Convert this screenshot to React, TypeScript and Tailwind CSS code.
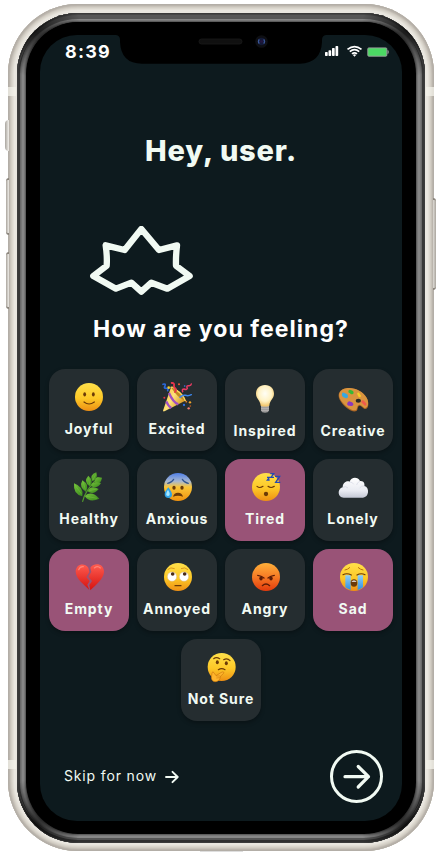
import React from "react";

type Mood = { label: string; art: React.ReactNode; selected?: boolean; low?: boolean };

function Defs() {
  return (
    <svg className="absolute h-0 w-0" aria-hidden="true">
      <defs>
        <linearGradient id="face" x1="0" y1="0" x2="0" y2="1">
          <stop offset="0" stopColor="#ffe04a" />
          <stop offset="0.55" stopColor="#fdc827" />
          <stop offset="1" stopColor="#ee8f14" />
        </linearGradient>
        <linearGradient id="cold" x1="0" y1="0" x2="0" y2="1">
          <stop offset="0" stopColor="#4f7fe8" />
          <stop offset="0.3" stopColor="#a9b8cf" />
          <stop offset="0.5" stopColor="#fbc638" />
          <stop offset="1" stopColor="#f0920f" />
        </linearGradient>
        <linearGradient id="rage" x1="0" y1="0" x2="0" y2="1">
          <stop offset="0" stopColor="#ffb03a" />
          <stop offset="0.5" stopColor="#f67a25" />
          <stop offset="1" stopColor="#e23a0c" />
        </linearGradient>
        <radialGradient id="bulb" cx="0.5" cy="0.4" r="0.6">
          <stop offset="0" stopColor="#fffef6" />
          <stop offset="0.6" stopColor="#fff2c4" />
          <stop offset="1" stopColor="#f0c163" />
        </radialGradient>
        <linearGradient id="cloud" x1="0" y1="0" x2="0" y2="1">
          <stop offset="0" stopColor="#ffffff" />
          <stop offset="0.65" stopColor="#e9ebf2" />
          <stop offset="1" stopColor="#c5c9d6" />
        </linearGradient>
        <linearGradient id="heart" x1="0" y1="0" x2="0" y2="1">
          <stop offset="0" stopColor="#ff5c50" />
          <stop offset="1" stopColor="#d5120f" />
        </linearGradient>
        <linearGradient id="leaf" x1="0" y1="0" x2="1" y2="1">
          <stop offset="0" stopColor="#74c23a" />
          <stop offset="1" stopColor="#38871c" />
        </linearGradient>
        <linearGradient id="cone" x1="0" y1="0" x2="1" y2="0.6">
          <stop offset="0" stopColor="#f3b52d" />
          <stop offset="0.5" stopColor="#ffe37a" />
          <stop offset="1" stopColor="#d18d1b" />
        </linearGradient>
        <linearGradient id="tear" x1="0" y1="0" x2="0" y2="1">
          <stop offset="0" stopColor="#8fd0f6" />
          <stop offset="1" stopColor="#2f8fe0" />
        </linearGradient>
      </defs>
    </svg>
  );
}

const ink = "#6b3a07";

const Joyful = (
  <g>
    <circle cx="45" cy="45" r="42" fill="url(#face)" />
    <ellipse cx="32" cy="37" rx="4.2" ry="6.5" fill={ink} />
    <ellipse cx="58" cy="37" rx="4.2" ry="6.5" fill={ink} />
    <path d="M30 60 Q45 72 61 60" fill="none" stroke={ink} strokeWidth="3.6" strokeLinecap="round" />
  </g>
);

const Excited = (
  <g fill="none" strokeLinecap="round">
    <path d="M27 16 L3 86 Q4 90 9 87 L70 56 Q54 23 27 16Z" fill="url(#cone)" />
    <path d="M21 33 Q33 61 49 67 M13 58 Q19 73 28 78" stroke="#a04fc2" strokeWidth="7" strokeLinecap="butt" />
    <path d="M27 16 Q52 22 70 56 Q46 48 27 16Z" fill="#c08a22" />
    <path d="M27 16 Q34 13 45 26 Q63 37 70 56" stroke="#ffd65c" strokeWidth="4" />
    <path d="M3 7 q9 -3 6 5 q-5 7 4 7 q7 -1 4 7" stroke="#2c69dc" strokeWidth="5" />
    <path d="M29 3 q9 -1 7 8 q-1 6 4 8 q4 5 -1 11" stroke="#e9334c" strokeWidth="5.5" />
    <path d="M62 29 q-3 -8 4 -8 q8 4 10 -2 q-4 -8 3 -8 q8 1 9 -5" stroke="#e83b63" strokeWidth="4.5" />
    <path d="M54 46 q8 -8 16 -6 q9 3 18 -2" stroke="#3c86ec" strokeWidth="4.5" />
    <g stroke="none">
      <circle cx="20" cy="17" r="4" fill="#f8cf30" />
      <circle cx="51" cy="7" r="3" fill="#f45a38" />
      <circle cx="7" cy="47" r="3" fill="#e32f48" />
      <circle cx="84" cy="61" r="3.5" fill="#f0a42b" />
      <circle cx="66" cy="69" r="3.5" fill="#336ee0" />
      <circle cx="80" cy="79" r="3.5" fill="#f57c72" />
      <circle cx="73" cy="59" r="2.5" fill="#e37b26" />
      <circle cx="85" cy="72" r="2.5" fill="#bc5920" />
      <circle cx="68" cy="12" r="2.5" fill="#3f78e9" />
    </g>
  </g>
);

const Inspired = (
  <g>
    <path d="M33 62 H57 V80 Q55 86 45 86 Q35 86 33 80Z" fill="#9b9a99" />
    <path d="M33 67 H57 M33 73 H57 M34 79 H56" stroke="#c2c0bd" strokeWidth="2" />
    <path d="M45 3 C28 3 18 15 18 29 C18 44 31 48 32 65 Q45 70 58 65 C59 48 72 44 72 29 C72 15 62 3 45 3Z" fill="url(#bulb)" />
  </g>
);

const Creative = (
  <g>
    <path d="M24 13 C45 8 75 21 86 42 C95 59 91 75 82 75 C75 75 73 66 65 65 C56 66 62 80 53 82 C39 85 14 65 5 47 C-3 30 5 16 24 13Z" fill="#a96425" />
    <path d="M25 13 C45 8 75 21 86 41 C94 56 90 69 82 72 C75 72 73 63 64 62 C55 64 60 76 52 79 C38 80 15 62 6 44 C-1 29 7 16 25 13Z" fill="#d9943f" />
    <ellipse cx="61" cy="50" rx="8" ry="6" fill="#2a2a27" />
    <path d="M12 29 q2-7 9 -1 q9 2 9 10 q-3 8 -9 3 q-11 -3 -9 -12Z" fill="#36a8e0" />
    <path d="M31 21 q4 -7 9 -2 q9 3 6 10 q-7 4 -10 -1 q-6 -1 -5 -7Z" fill="#36b936" />
    <path d="M57 29 q4 -7 8 0 q6 5 3 10 q-6 2 -8 -4Z" fill="#f4cd26" />
    <path d="M71 50 q5 -4 9 3 q8 5 4 12 q-7 0 -9 -6 q-7 -3 -4 -9Z" fill="#ef5a4d" />
    <path d="M28 57 q3 -7 10 -4 q9 3 8 10 q-4 5 -10 2 q-10 2 -8 -8Z" fill="#8b37bd" />
  </g>
);

const Healthy = (
  <g>
    <path d="M26 88 Q33 56 72 17" fill="none" stroke="#539b2c" strokeWidth="3.5" strokeLinecap="round" />
    <g fill="url(#leaf)">
      <path d="M67 1 Q45 9 55 28 Q74 20 67 1Z" />
      <path d="M84 17 Q62 11 62 31 Q80 40 84 17Z" />
      <path d="M43 11 Q27 29 47 43 Q62 29 43 11Z" />
      <path d="M25 25 Q14 46 36 60 Q48 38 25 25Z" />
      <path d="M0 34 Q-3 67 25 73 Q31 45 0 34Z" />
      <path d="M81 33 Q53 25 51 42 Q68 53 81 33Z" />
      <path d="M74 51 Q50 38 41 58 Q58 71 74 51Z" />
      <path d="M76 80 Q53 54 32 72 Q46 94 76 80Z" />
    </g>
    <path d="M3 39 L23 67 M28 30 L34 53 M44 17 L47 38 M65 7 L57 24 M37 73 L69 79 M46 56 L69 51" stroke="#8dce50" strokeWidth="1" />
  </g>
);

const Anxious = (
  <g>
    <circle cx="48" cy="45" r="42" fill="url(#cold)" />
    <path d="M17 34 Q29 32 35 22 M61 22 Q67 32 79 34" fill="none" stroke="#315490" strokeWidth="3.5" strokeLinecap="round" />
    <ellipse cx="36" cy="47" rx="5" ry="6" fill={ink} />
    <ellipse cx="60" cy="47" rx="5" ry="6" fill={ink} />
    <path d="M33 74 Q36 62 48 62 Q60 62 63 74 Q48 68 33 74Z" fill={ink} />
    <path d="M19 46 Q7 60 8 69 Q10 78 19 78 Q29 78 30 69 Q30 60 19 46Z" fill="#2fa3e8" />
    <path d="M18 53 Q11 64 13 70 Q19 75 23 69 Q24 62 18 53Z" fill="#a7e7ff" />
  </g>
);

const Tired = (
  <g>
    <circle cx="48" cy="45" r="42" fill="url(#face)" />
    <path d="M21 43 Q29 50 39 43 M54 43 Q63 50 73 43" fill="none" stroke={ink} strokeWidth="3.5" strokeLinecap="round" />
    <ellipse cx="48" cy="66" rx="6.5" ry="6.5" fill={ink} />
    <path d="M51 16 H58 L52 24 H59 M61 5 H71 L63 16 H72 M75 13 H89 L77 31 H91" fill="none" stroke="#244bb4" strokeWidth="4" />
  </g>
);

const Lonely = (
  <g>
    <path d="M18 77 C-2 78 -3 50 14 46 C14 33 25 25 35 29 C39 14 60 13 66 27 C77 25 81 35 79 42 C96 46 93 76 75 77Z" fill="url(#cloud)" />
    <path d="M15 46 Q23 41 30 48 M35 30 Q44 30 47 37 M66 28 Q57 31 56 39 M79 42 Q70 40 65 48" fill="none" stroke="#d3d7e2" strokeWidth="2" />
  </g>
);

const Empty = (
  <g>
    <path d="M43 17 C31 0 5 6 5 29 C6 52 31 67 46 84 L40 68 L47 57 L37 45 L46 30Z" fill="url(#heart)" />
    <path d="M49 17 C62 0 90 5 90 29 C89 52 65 68 49 85 L46 69 L54 57 L43 44 L52 30Z" fill="url(#heart)" />
    <path d="M14 23 Q18 13 28 14 M61 18 Q71 10 79 18" fill="none" stroke="#ff8577" strokeWidth="3.5" strokeLinecap="round" />
  </g>
);

const Annoyed = (
  <g>
    <circle cx="48" cy="45" r="42" fill="url(#face)" />
    <circle cx="30" cy="44" r="14" fill="#fff" stroke="#d8b980" strokeWidth="1.5" />
    <circle cx="66" cy="44" r="14" fill="#fff" stroke="#d8b980" strokeWidth="1.5" />
    <circle cx="32" cy="36" r="5.5" fill="#4a2b17" />
    <circle cx="68" cy="36" r="5.5" fill="#4a2b17" />
    <path d="M39 71 H57" stroke={ink} strokeWidth="3.5" strokeLinecap="round" />
    <path d="M17 23 Q26 14 38 20 M57 20 Q69 14 78 23" fill="none" stroke="#d38a15" strokeWidth="2.5" />
  </g>
);

const Angry = (
  <g>
    <circle cx="48" cy="45" r="42" fill="url(#rage)" />
    <ellipse cx="33" cy="49" rx="5" ry="6.5" fill="#5d1c06" />
    <ellipse cx="63" cy="49" rx="5" ry="6.5" fill="#5d1c06" />
    <path d="M23 40 Q34 41 42 48 M54 48 Q62 41 73 40" fill="none" stroke="#5d1c06" strokeWidth="3.8" strokeLinecap="round" />
    <path d="M37 71 Q48 61 59 71" fill="none" stroke="#5d1c06" strokeWidth="4" strokeLinecap="round" />
  </g>
);

const Sad = (
  <g>
    <circle cx="48" cy="45" r="42" fill="url(#face)" />
    <path d="M22 40 H38 V84 Q27 80 22 76Z M59 40 H75 V76 Q69 81 59 84Z" fill="url(#tear)" />
    <path d="M15 38 Q27 32 40 39 M57 39 Q69 32 81 38" fill="none" stroke={ink} strokeWidth="3.6" strokeLinecap="round" />
    <path d="M21 24 Q29 23 35 17 M61 17 Q67 23 75 24" fill="none" stroke="#b86f12" strokeWidth="3" strokeLinecap="round" />
    <path d="M38 63 Q38 52 48 52 Q58 52 58 63 Q58 74 48 74 Q38 74 38 63Z" fill={ink} />
    <path d="M40 59 Q48 52 56 59Z" fill="#fff" />
  </g>
);

const NotSure = (
  <g>
    <circle cx="47" cy="45" r="42" fill="url(#face)" />
    <ellipse cx="34" cy="31" rx="4.5" ry="6" fill={ink} />
    <ellipse cx="61" cy="34" rx="4.5" ry="6" fill={ink} />
    <path d="M23 20 Q31 14 41 20 M53 23 Q64 17 72 26" fill="none" stroke={ink} strokeWidth="3.5" strokeLinecap="round" />
    <path d="M37 53 Q47 47 57 53" fill="none" stroke={ink} strokeWidth="3.5" strokeLinecap="round" />
    <path d="M18 63 Q20 55 25 64 L30 71 L48 60 Q56 58 52 65 L44 72 Q42 87 30 89 Q18 90 16 78Z" fill="#ffb52d" stroke="#cc790d" strokeWidth="2" />
    <path d="M31 72 L43 72 M31 78 L42 77" stroke="#cc790d" strokeWidth="1.8" />
  </g>
);

const moods: Mood[] = [
  { label: "Joyful", art: Joyful },
  { label: "Excited", art: Excited },
  { label: "Inspired", art: Inspired, low: true },
  { label: "Creative", art: Creative, low: true },
  { label: "Healthy", art: Healthy },
  { label: "Anxious", art: Anxious },
  { label: "Tired", art: Tired, selected: true },
  { label: "Lonely", art: Lonely },
  { label: "Empty", art: Empty, selected: true },
  { label: "Annoyed", art: Annoyed },
  { label: "Angry", art: Angry },
  { label: "Sad", art: Sad, selected: true },
  { label: "Not Sure", art: NotSure },
];

function MoodCard({ label, art, selected, low }: Mood) {
  return (
    <button
      className={`flex h-[82px] w-20 flex-col items-center rounded-2xl shadow-[0_2px_4px_rgba(0,0,0,0.3)] ${
        selected ? "bg-[#995377]" : "bg-[#252d30]"
      } ${low ? "pt-[15px]" : "pt-[13px]"}`}
    >
      <svg viewBox="0 0 90 90" className="h-[30px] w-[30px] shrink-0 overflow-visible">{art}</svg>
      <span className="mt-[7px] text-[14px] leading-5 font-bold tracking-[0.9px] whitespace-nowrap text-[#f1faf3]">
        {label}
      </span>
    </button>
  );
}

function Notch() {
  return (
    <div className="absolute top-0 left-[76px] h-[29px] w-[210px]">
      <svg viewBox="0 0 210 29" className="h-full w-full">
        <path d="M0 0 Q4 0.5 4 5 V7 Q5 28.7 26 28.7 H184 Q205 28 206 7 V5 Q206 0.5 210 0Z" fill="#000" />
        <rect x="83" y="4" width="43" height="5" rx="2.5" fill="#101010" stroke="#1b1b1b" strokeWidth="0.8" />
        <circle cx="145.500" cy="6.500" r="6.300" fill="#0e0f13" />
        <circle cx="145.500" cy="6.500" r="3.700" fill="#131936" />
        <path d="M143.300 4.300 Q141.500 6.500 143.300 8.700 M147.700 4.300 Q149.500 6.500 147.700 8.700" fill="none" stroke="#3a5697" strokeWidth="1.200" />
        <circle cx="145.500" cy="6.500" r="1.300" fill="#261540" />
      </svg>
    </div>
  );
}

function StatusBar() {
  return (
    <div className="flex h-8 items-center justify-between pr-[13px] pl-[25px]">
      <span className="mt-[2px] text-[18px] leading-8 font-bold tracking-[1.2px] text-white">8:39</span>
      <svg viewBox="0 0 65 12" className="-mt-px h-3 w-[65px]">
        <g fill="#fff">
          <rect x="1" y="7" width="2.700" height="4" rx="0.700" />
          <rect x="4.500" y="5.200" width="2.700" height="5.800" rx="0.700" />
          <rect x="8" y="3" width="2.700" height="8" rx="0.700" />
          <rect x="11.500" y="1" width="2.700" height="10" rx="0.700" />
        </g>
        <g fill="none" stroke="#fff" strokeWidth="1.700">
          <path d="M23.500 4.400 Q30.500 -1.200 37.500 4.400" />
          <path d="M25.800 6.700 Q30.500 2.700 35.200 6.700" />
          <path d="M28 8.900 Q30.500 6.800 33 8.900" />
        </g>
        <path d="M28.900 9.900 Q30.500 8.800 32.100 9.900 L30.500 11.700Z" fill="#fff" />
        <rect x="43.800" y="2.900" width="19" height="8.300" rx="1" fill="#4bd964" stroke="#9fa2a3" strokeWidth="0.900" />
        <path d="M63.300 5 Q65 5.200 65 7 Q65 8.800 63.300 9Z" fill="#818687" />
      </svg>
    </div>
  );
}

function SideHardware() {
  return (
    <>
      <div className="absolute top-[120px] left-[5px] h-[31px] w-1 rounded-l bg-gradient-to-r from-[#a9a59f] to-[#f3f1ec]" />
      <div className="absolute top-[178px] left-[6px] h-[57px] w-[3px] rounded-l border-y-2 border-[#8b857d] bg-gradient-to-r from-[#aaa59e] to-[#f0eee9]" />
      <div className="absolute top-[252px] left-[6px] h-[57px] w-[3px] rounded-l border-y-2 border-[#8b857d] bg-gradient-to-r from-[#aaa59e] to-[#f0eee9]" />
      <div className="absolute top-[198px] left-[433px] h-[92px] w-[3px] rounded-r border-y-2 border-[#8b857d] bg-gradient-to-l from-[#aaa59e] to-[#dedbd5]" />
      <div className="absolute top-[87px] left-2 h-[9px] w-2 bg-[#f3f1ea]/75" />
      <div className="absolute top-[87px] left-[426px] h-[9px] w-2 bg-[#f3f1ea]/75" />
      <div className="absolute top-[760px] left-2 h-[9px] w-2 bg-[#f3f1ea]/75" />
      <div className="absolute top-[760px] left-[426px] h-[9px] w-2 bg-[#f3f1ea]/75" />
      <div className="absolute top-[851px] left-[200px] h-px w-[43px] bg-[#dedede]" />
    </>
  );
}

export default function App() {
  return (
    <div className="relative h-[856px] w-[442px] overflow-hidden bg-white px-2 pt-1 font-['Inter','Liberation_Sans',sans-serif]">
      <Defs />
      <div className="h-[847px] w-[426px] rounded-[70px] bg-[#e9e6df] px-[9px] pt-[9px] pb-2 shadow-[inset_0_0_0_1px_#b3aea7,inset_0_0_0_2px_#bbb5ad,inset_0_0_0_3px_#c8c3ba,inset_0_0_0_4px_#d3cec5,inset_0_0_0_5px_#dbd7ce,inset_0_0_0_6px_#e3dfd7]">
        <div className="relative h-full rounded-[61px] bg-black px-[10px] pt-[9px] pb-[10px] shadow-[inset_0_0_0_1px_#3b3b3b,inset_0_2px_0_0_#464646,inset_0_-3px_0_0_#303030,inset_0_6px_0_0_#565656,inset_0_-5px_0_0_#555555,inset_0_0_0_3px_#373737,inset_0_0_0_4px_#696969,inset_0_0_0_5px_#777777,inset_0_0_0_7px_#868686,inset_0_0_0_8px_#777777,inset_0_0_0_9px_#5c5c5c]">
          {/* corner shading where the bezel turns away from the light */}
          <div className="absolute inset-0 rounded-[61px] bg-[radial-gradient(circle_at_18px_18px,rgba(0,0,0,0.72),transparent_46px),radial-gradient(circle_at_390px_18px,rgba(0,0,0,0.72),transparent_46px),radial-gradient(circle_at_18px_812px,rgba(0,0,0,0.72),transparent_46px),radial-gradient(circle_at_390px_812px,rgba(0,0,0,0.72),transparent_46px)]" />
          <div className="relative h-full rounded-[51px] bg-black px-[13px] pt-[13px] pb-3">
            <main className="relative h-full overflow-hidden rounded-[37px] bg-[#0d1a1e]">
              <Notch />
              <StatusBar />
              <h1 className="mt-[65px] text-center text-[29px] leading-[38px] font-extrabold tracking-[0.8px] text-[#f1faf3]">
                Hey, user.
              </h1>
              <svg viewBox="0 0 312 210" className="mt-[56px] ml-[50px] h-[70px] w-[104px]">
                <path
                  d="M154 9 L104 72 L47 58 Q52 92 50 119 L10 150 L78 188 L124 170 L154 197 L184 170 L232 188 L299 150 L258 119 Q257 92 261 58 L207 72Z"
                  fill="none"
                  stroke="#f1faf3"
                  strokeWidth="19"
                  strokeLinejoin="round"
                />
              </svg>
              <h2 className="mt-[15px] text-center text-[23px] leading-[36px] font-bold tracking-[1.05px] text-white">
                How are you feeling?
              </h2>
              <section className="mt-[22px] flex flex-wrap justify-center gap-2 px-[9px]">
                {moods.map((mood) => (
                  <MoodCard key={mood.label} {...mood} />
                ))}
              </section>
              <footer className="mt-[29px] flex items-center justify-between pr-[19px] pl-6">
                <button className="-mt-[2px] flex items-center gap-2 text-[14px] leading-5 tracking-[0.85px] text-[#f1faf3]">
                  <span>Skip for now</span>
                  <svg viewBox="0 0 14 14" className="mt-[2px] h-[14px] w-[14px]">
                    <path d="M1 7 H12.500 M7.500 1.800 L12.700 7 L7.500 12.200" fill="none" stroke="#f1faf3" strokeWidth="1.900" strokeLinecap="round" strokeLinejoin="round" />
                  </svg>
                </button>
                <button aria-label="Next">
                  <svg viewBox="0 0 53 53" className="h-[53px] w-[53px]">
                    <circle cx="26.500" cy="26.500" r="25" fill="none" stroke="#f1faf3" strokeWidth="3" />
                    <path d="M15 26.700 H38.500 M28.200 16.500 L38.500 26.700 L28.200 37" fill="none" stroke="#f1faf3" strokeWidth="3.200" strokeLinecap="round" strokeLinejoin="round" />
                  </svg>
                </button>
              </footer>
            </main>
          </div>
        </div>
      </div>
      <SideHardware />
    </div>
  );
}
